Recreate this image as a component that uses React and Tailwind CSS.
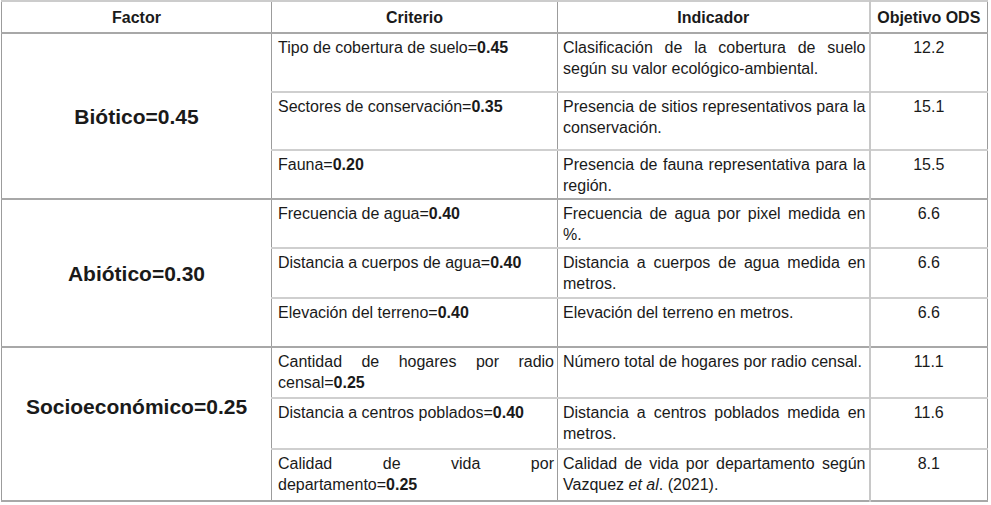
import React from "react";

const groups = [
  {
    factor: "Biótico=0.45",
    pad: "",
    rows: [
      { h: "h-[59px]", crit: "Tipo de cobertura de suelo=", w: "0.45", ind: "Clasificación de la cobertura de suelo según su valor ecológico-ambiental.", ods: "12.2" },
      { h: "h-[58px]", crit: "Sectores de conservación=", w: "0.35", ind: "Presencia de sitios representativos para la conservación.", ods: "15.1" },
      { h: "h-[49px]", crit: "Fauna=", w: "0.20", ind: "Presencia de fauna representativa para la región.", ods: "15.5" },
    ],
  },
  {
    factor: "Abiótico=0.30",
    pad: "",
    rows: [
      { h: "h-[49px]", crit: "Frecuencia de agua=", w: "0.40", ind: "Frecuencia de agua por pixel medida en %.", ods: "6.6" },
      { h: "h-[50px]", crit: "Distancia a cuerpos de agua=", w: "0.40", ind: "Distancia a cuerpos de agua medida en metros.", ods: "6.6" },
      { h: "h-[49px]", crit: "Elevación del terreno=", w: "0.40", ind: "Elevación del terreno en metros.", ods: "6.6" },
    ],
  },
  {
    factor: "Socioeconómico=0.25",
    pad: "pb-[36px]",
    rows: [
      { h: "h-[51px]", crit: "Cantidad de hogares por radio censal=", w: "0.25", ind: "Número total de hogares por radio censal.", ods: "11.1" },
      { h: "h-[51px]", crit: "Distancia a centros poblados=", w: "0.40", ind: "Distancia a centros poblados medida en metros.", ods: "11.6" },
      {
        h: "h-[52px]",
        crit: "Calidad de vida por departamento=",
        w: "0.25",
        ind: (
          <>
            Calidad de vida por departamento según Vazquez <i>et al</i>. (2021).
          </>
        ),
        ods: "8.1",
      },
    ],
  },
];

export default function App() {
  return (
    <div className="w-[991px] h-[505px] bg-white text-[#1a1a1a]" style={{ fontFamily: "'Liberation Sans', Arial, sans-serif" }}>
      <table className="ml-px table-fixed border-collapse text-[16px] leading-[21px]">
        <colgroup>
          <col className="w-[270px]" />
          <col className="w-[286px]" />
          <col className="w-[312px]" />
          <col className="w-[118px]" />
        </colgroup>
        <thead>
          <tr className="h-[32px] border-t-2 border-t-[#cccccc]">
            {["Factor", "Criterio", "Indicador", "Objetivo ODS"].map((t, i) => (
              <th
                key={t}
                className={`border border-[#9c9c9c] border-t-[#cccccc] font-bold text-center align-middle px-1 ${i === 3 ? "border-l-2 border-l-[#c8c8c8]" : ""}`}
              >
                {t}
              </th>
            ))}
          </tr>
        </thead>
        <tbody>
          {groups.map((g) =>
            g.rows.map((r, i) => (
              <tr
                key={r.crit}
                className={`${r.h} ${i === 0 ? "border-t-2 border-t-[#a8a8a8]" : "border-t-2 border-t-[#cfcfcf]"}`}
              >
                {i === 0 && (
                  <td
                    rowSpan={g.rows.length}
                    className={`border-x border-x-[#9c9c9c] border-t-2 border-t-[#a8a8a8] text-center align-middle font-bold text-[21px] ${g.pad}`}
                  >
                    {g.factor}
                  </td>
                )}
                <td className="border-l border-l-[#9c9c9c] align-top text-justify pl-[6px] pr-[3px] pt-[3px]">
                  {r.crit}
                  <b>{r.w}</b>
                </td>
                <td className="border-l border-l-[#9c9c9c] align-top text-justify pl-[5px] pr-[3px] pt-[3px]">
                  {r.ind}
                </td>
                <td className="border-l-2 border-l-[#c8c8c8] border-r border-r-[#9c9c9c] align-top text-center pt-[3px]">
                  {r.ods}
                </td>
              </tr>
            ))
          )}
          <tr className="border-t-2 border-t-[#a8a8a8]" />
        </tbody>
      </table>
    </div>
  );
}
